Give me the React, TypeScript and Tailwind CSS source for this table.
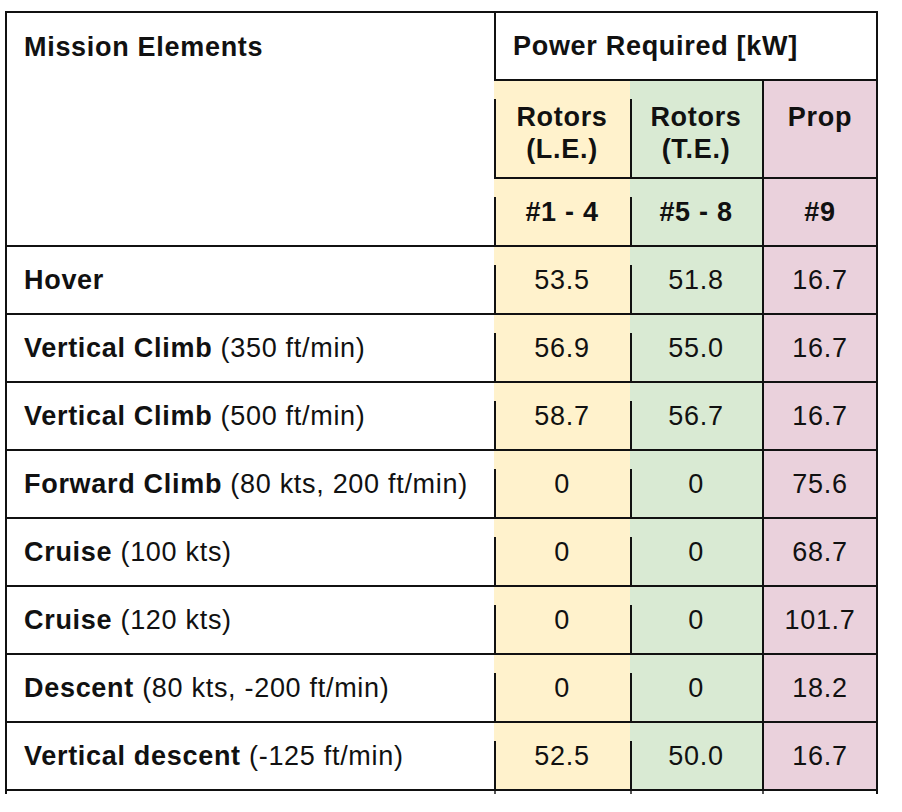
const rows = [
  { name: 'Hover', note: '', le: '53.5', te: '51.8', prop: '16.7' },
  { name: 'Vertical Climb', note: '(350 ft/min)', le: '56.9', te: '55.0', prop: '16.7' },
  { name: 'Vertical Climb', note: '(500 ft/min)', le: '58.7', te: '56.7', prop: '16.7' },
  { name: 'Forward Climb', note: '(80 kts, 200 ft/min)', le: '0', te: '0', prop: '75.6' },
  { name: 'Cruise', note: '(100 kts)', le: '0', te: '0', prop: '68.7' },
  { name: 'Cruise', note: '(120 kts)', le: '0', te: '0', prop: '101.7' },
  { name: 'Descent', note: '(80 kts, -200 ft/min)', le: '0', te: '0', prop: '18.2' },
  { name: 'Vertical descent', note: '(-125 ft/min)', le: '52.5', te: '50.0', prop: '16.7' },
];

// left rule that starts a little below the top of the cell, like the source pdf render
const rule =
  'bg-[linear-gradient(#111,#111)] bg-no-repeat bg-[length:2px_calc(100%-18px)] bg-[position:0_100%]';

export default function App() {
  return (
    <div className="min-h-screen bg-white text-[#111] text-[27px] tracking-[0.7px] font-['Liberation_Sans',Arial,sans-serif]">
      <div className="ml-[5px] pt-[11px]">
        <div className="w-[873px] border-2 border-b-0 border-[#111] grid grid-cols-[487px_136px_132px_114px] grid-rows-[68px_98px_68px_repeat(8,68px)_3px]">
          {/* header */}
          <div className="row-span-3 border-b-2 border-[#111] pl-[17px] pt-[18px] leading-[32px] font-bold">
            Mission Elements
          </div>
          <div className="col-span-3 flex items-center border-l-2 border-b-2 border-[#111] pl-[17px] font-bold">
            Power Required [kW]
          </div>

          <div className={`bg-[#fff2cc] ${rule} border-b-2 border-[#111] pt-[20px] text-center leading-[32px] font-bold`}>
            Rotors
            <br />
            (L.E.)
          </div>
          <div className={`bg-[#d9ead3] ${rule} border-b-2 border-[#111] pt-[20px] text-center leading-[32px] font-bold`}>
            Rotors
            <br />
            (T.E.)
          </div>
          <div className="bg-[#ead1dc] border-l-2 border-b-2 border-[#111] pt-[20px] text-center leading-[32px] font-bold">
            Prop
          </div>

          <div className={`bg-[#fff2cc] ${rule} border-b-2 border-[#111] flex items-center justify-center font-bold`}>
            #1 - 4
          </div>
          <div className={`bg-[#d9ead3] ${rule} border-b-2 border-[#111] flex items-center justify-center font-bold`}>
            #5 - 8
          </div>
          <div className="bg-[#ead1dc] border-l-2 border-b-2 border-[#111] flex items-center justify-center font-bold">
            #9
          </div>

          {/* body */}
          {rows.map((r, i) => (
            <div key={i} className="contents">
              <div className="flex items-center border-b-2 border-[#111] pl-[17px] whitespace-nowrap">
                <span className="font-bold">{r.name}</span>
                {r.note && <span>&nbsp;{r.note}</span>}
              </div>
              <div className={`bg-[#fff2cc] ${rule} border-b-2 border-[#111] flex items-center justify-center`}>
                {r.le}
              </div>
              <div className={`bg-[#d9ead3] ${rule} border-b-2 border-[#111] flex items-center justify-center`}>
                {r.te}
              </div>
              <div className="bg-[#ead1dc] border-l-2 border-b-2 border-[#111] flex items-center justify-center">
                {r.prop}
              </div>
            </div>
          ))}

          {/* little stubs under the last line */}
          <div />
          <div className="border-l-2 border-[#555]" />
          <div className="border-l-2 border-[#555]" />
          <div className="border-l-2 border-[#555]" />
        </div>
      </div>
    </div>
  );
}
